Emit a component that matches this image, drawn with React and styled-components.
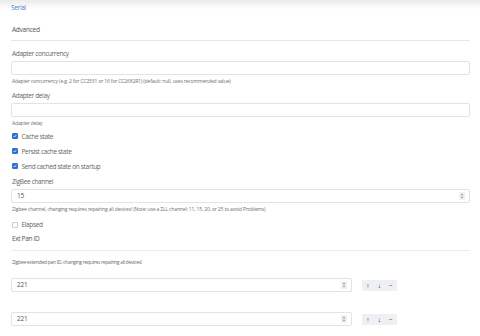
import styled, { createGlobalStyle } from 'styled-components';

const Global = createGlobalStyle`
  body {
    margin: 0;
    background: #fff;
    font-family: "Open Sans", "Liberation Sans", sans-serif;
    color: #555;
  }
`;

const Page = styled.div`
  width: 480px;
  height: 336px;
  overflow: hidden;
  background: linear-gradient(#ebebeb 0px, #fff 9px);
`;
const Tabs = styled.div`
  height: 16px;
  line-height: 16px;
  padding-left: 11px;
  font-size: 6.5px;
  letter-spacing: -0.3px;
  color: #4a7fc4;
`;
const Body = styled.div`
  padding: 0 10px 0 11px;
`;
const SectionTitle = styled.div`
  margin-top: 8px;
  line-height: 12px;
  padding: 0 1px 4px;
  font-size: 6.6px;
  letter-spacing: -0.3px;
  color: #555;
  border-bottom: 1px solid #e6e6e6;
`;
const Field = styled.div`
  margin-top: ${(p) => p.$mt ?? 8}px;
`;
const Label = styled.div`
  line-height: 10px;
  padding-left: 1px;
  margin-bottom: 2px;
  font-size: 6.5px;
  letter-spacing: -0.35px;
  color: #666;
`;
const InputBox = styled.div`
  position: relative;
  box-sizing: border-box;
  height: 14px;
  width: ${(p) => p.$width || '100%'};
  border: 1px solid #e3e3e3;
  border-radius: 2px;
  background: #fff;
  padding-left: 5px;
  line-height: 12px;
  font-size: 6.5px;
  letter-spacing: -0.2px;
  color: #555;
`;
const Spin = styled.svg`
  position: absolute;
  right: 4px;
  top: 2px;
`;
const Help = styled.div`
  margin-top: ${(p) => p.$mt ?? 1.5}px;
  line-height: 8px;
  padding-left: 1px;
  font-size: 5px;
  letter-spacing: -0.15px;
  color: #6e6e6e;
`;
const CheckRow = styled.label`
  display: flex;
  align-items: center;
  gap: 3.5px;
  height: 15px;
  padding-left: 1px;
  font-size: 6.5px;
  letter-spacing: -0.33px;
  color: #666;
`;
const Box = styled.span`
  box-sizing: border-box;
  width: 6px;
  height: 6px;
  border-radius: 1px;
  display: flex;
  align-items: center;
  justify-content: center;
  background: ${(p) => (p.$on ? '#2d6fd2' : '#fff')};
  border: 1px solid ${(p) => (p.$on ? '#2d6fd2' : '#cfcfcf')};
`;
const Checks = styled.div`
  margin-top: ${(p) => p.$mt}px;
`;
const Legend = styled.div`
  margin-top: 2px;
  line-height: 10px;
  padding: 0 1px 6px;
  font-size: 6.5px;
  letter-spacing: -0.35px;
  color: #555;
  border-bottom: 1px solid #ececec;
`;
const Desc = styled.div`
  margin-top: 6px;
  line-height: 10px;
  padding-left: 1px;
  font-size: 5.2px;
  letter-spacing: -0.38px;
  color: #6e6e6e;
`;
const ArrayItem = styled.div`
  display: flex;
  align-items: center;
  gap: 10px;
  margin-top: ${(p) => p.$mt}px;
`;
const BtnGroup = styled.div`
  display: flex;
  background: #eef0f3;
  border-radius: 1px;
  height: 11px;
  margin-top: 1px;
`;
const Btn = styled.span`
  width: 11.5px;
  display: flex;
  align-items: center;
  justify-content: center;
  font-size: 6.5px;
  color: #333;
`;

const Spinner = () => (
  <Spin width="6" height="8" viewBox="0 0 6 8">
    <rect x="0" y="0" width="6" height="8" rx="1" fill="#f0f0f0" />
    <path d="M1.5 3.2 L3 1.6 L4.5 3.2 Z" fill="#9a9a9a" />
    <path d="M1.5 4.8 L3 6.4 L4.5 4.8 Z" fill="#9a9a9a" />
  </Spin>
);

const Check = ({ on, children }) => (
  <CheckRow>
    <Box $on={on}>
      {on && (
        <svg width="4" height="4" viewBox="0 0 4 4">
          <path d="M0.6 2 L1.6 3 L3.4 0.9" stroke="#fff" strokeWidth="0.8" fill="none" />
        </svg>
      )}
    </Box>
    {children}
  </CheckRow>
);

const PanItem = ({ mt }) => (
  <ArrayItem $mt={mt}>
    <InputBox $width="341px">
      221
      <Spinner />
    </InputBox>
    <BtnGroup>
      <Btn>↑</Btn>
      <Btn>↓</Btn>
      <Btn>−</Btn>
    </BtnGroup>
  </ArrayItem>
);

export default function App() {
  return (
    <>
      <Global />
      <Page>
        <Tabs>Serial</Tabs>
        <Body>
          <SectionTitle>Advanced</SectionTitle>
          <Field>
            <Label>Adapter concurrency</Label>
            <InputBox />
            <Help>
              Adapter concurrency (e.g. 2 for CC2531 or 16 for CC26X2R1) (default: null, uses recommended value)
            </Help>
          </Field>
          <Field $mt={6.5}>
            <Label>Adapter delay</Label>
            <InputBox />
            <Help>Adapter delay</Help>
          </Field>
          <Checks $mt={2}>
            <Check on>Cache state</Check>
            <Check on>Persist cache state</Check>
            <Check on>Send cached state on startup</Check>
          </Checks>
          <Field $mt={3}>
            <Label>ZigBee channel</Label>
            <InputBox>
              15
              <Spinner />
            </InputBox>
            <Help $mt={2.5}>
              Zigbee channel, changing requires repairing all devices! (Note: use a ZLL channel: 11, 15, 20, or 25 to avoid Problems)
            </Help>
          </Field>
          <Checks $mt={4}>
            <Check>Elapsed</Check>
          </Checks>
          <Legend>Ext Pan ID</Legend>
          <Desc>Zigbee extended pan ID, changing requires repairing all devices!</Desc>
          <PanItem mt={10.5} />
          <PanItem mt={20} />
        </Body>
      </Page>
    </>
  );
}
